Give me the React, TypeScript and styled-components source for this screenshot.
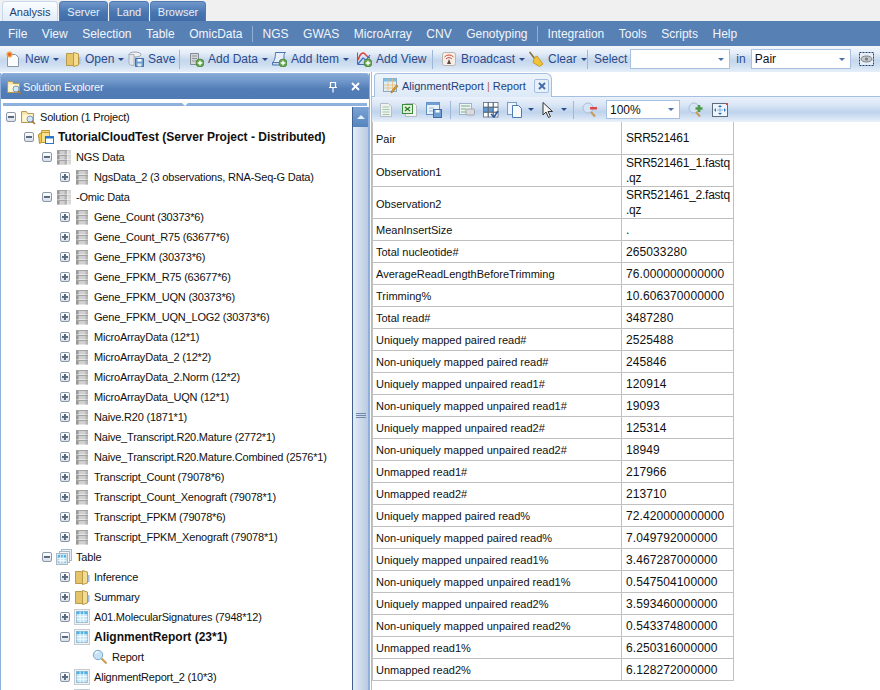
import React from 'react';
import styled, { createGlobalStyle } from 'styled-components';

const GlobalStyle = createGlobalStyle`
  html, body {
    margin: 0;
    padding: 0;
    background: #fff;
    font-family: 'Liberation Sans', Arial, sans-serif;
  }
`;

const Page = styled.div`
  width: 880px;
  height: 690px;
  overflow: hidden;
  display: flex;
  flex-direction: column;
  background: #fff;
`;

const TabStrip = styled.div`
  height: 21px;
  flex: none;
  display: flex;
  align-items: flex-end;
  gap: 1px;
  padding-left: 2px;
  background: #f0f0f0;
`;

const AppTab = styled.div<{ $active?: boolean; $w: number }>`
  box-sizing: border-box;
  width: ${(p) => p.$w}px;
  height: 20px;
  display: flex;
  align-items: center;
  justify-content: center;
  font-size: 11px;
  border: 1px solid ${(p) => (p.$active ? '#c6d8ee' : '#4f7ab2')};
  border-bottom: none;
  border-radius: 4px 4px 0 0;
  color: ${(p) => (p.$active ? '#1f3f70' : '#e8eff8')};
  background: ${(p) =>
    p.$active
      ? 'linear-gradient(#fbfdff, #e2ecf8)'
      : 'linear-gradient(#6f97cb, #4a76b0 55%, #3f6ba8)'};
`;

const MenuBar = styled.div`
  height: 25px;
  flex: none;
  display: flex;
  align-items: center;
  gap: 14.5px;
  padding-left: 8px;
  background: #5780b5;
  color: #f2f6fb;
  font-size: 12px;
`;

const MenuDivider = styled.div`
  width: 1px;
  height: 16px;
  margin: 0 -5px;
  background: #90afd4;
`;

const MainToolbar = styled.div`
  height: 26px;
  flex: none;
  display: flex;
  align-items: center;
  padding-left: 5px;
  color: #2b4a8b;
  font-size: 12px;
  background: linear-gradient(#f3f7fc, #e6eef8 25%, #c5d7ed 55%, #cfdff1 75%, #e6eff9);
`;

const ToolButton = styled.div<{ $w: number }>`
  width: ${(p) => p.$w}px;
  flex: none;
  display: flex;
  align-items: center;
  gap: 4px;
  white-space: nowrap;
`;

const Caret = styled.span`
  width: 0;
  height: 0;
  border-left: 3px solid transparent;
  border-right: 3px solid transparent;
  border-top: 3px solid #2b4a8b;
`;

const ToolDivider = styled.div<{ $mr: number }>`
  width: 1px;
  height: 19px;
  flex: none;
  margin-right: ${(p) => p.$mr}px;
  background: #9db7d8;
`;

const Combo = styled.div<{ $w: number; $h?: number }>`
  box-sizing: border-box;
  width: ${(p) => p.$w}px;
  height: ${(p) => p.$h || 20}px;
  flex: none;
  display: flex;
  align-items: center;
  justify-content: space-between;
  padding: 0 5px 0 3px;
  background: #fff;
  border: 1px solid #a9c1e0;
  color: #111;
  font-size: 12px;
`;

const ComboCaret = styled.span`
  width: 0;
  height: 0;
  border-left: 3px solid transparent;
  border-right: 3px solid transparent;
  border-top: 3px solid #4a70aa;
`;

const SelectLabel = styled.span<{ $ml: number; $mr: number }>`
  margin: 0 ${(p) => p.$mr}px 0 ${(p) => p.$ml}px;
`;

const EyeSlot = styled.div`
  margin-left: 8px;
`;

const Workspace = styled.div`
  flex: 1;
  min-height: 0;
  display: flex;
  background: #fff;
`;

const ExplorerPanel = styled.div`
  width: 370px;
  flex: none;
  display: flex;
  flex-direction: column;
  box-sizing: border-box;
  border-left: 1px solid #8fb0dc;
  border-right: 1px solid #8fb0dc;
  margin-top: 1px;
`;

const ExplorerHeader = styled.div`
  height: 26px;
  flex: none;
  display: flex;
  align-items: center;
  padding: 0 9px 0 5px;
  gap: 1px;
  box-sizing: border-box;
  border-top: 1px solid #8fb0dc;
  border-radius: 3px 3px 0 0;
  color: #f4f7fc;
  font-size: 11px;
  letter-spacing: -0.2px;
  background: linear-gradient(#86a9d5, #6e96c9 30%, #527db6 60%, #4f7ab4);
`;

const HeaderTitle = styled.span`
  flex: 1;
`;

const HeaderTools = styled.div`
  display: flex;
  align-items: center;
  gap: 13px;
`;

const SplitBand = styled.div`
  height: 3px;
  flex: none;
  margin: 4px 2px 0;
  display: flex;
  justify-content: center;
  background: #8db0dc;
`;

const SplitArrow = styled.span`
  width: 0;
  height: 0;
  border-left: 3px solid transparent;
  border-right: 3px solid transparent;
  border-top: 3px solid #fff;
`;

const ExplorerBody = styled.div`
  flex: 1;
  min-height: 0;
  display: flex;
  margin-top: 1px;
`;

const Tree = styled.div`
  flex: 1;
  min-width: 0;
  overflow: hidden;
  background: #fff;
`;

const TreeRow = styled.div<{ $level: number }>`
  height: 20px;
  flex: none;
  display: flex;
  align-items: center;
  gap: 4px;
  padding-left: ${(p) => 5 + p.$level * 18}px;
  color: #111;
  white-space: nowrap;
`;

const TreeLabel = styled.span<{ $bold?: boolean }>`
  font-weight: ${(p) => (p.$bold ? 700 : 400)};
  font-size: ${(p) => (p.$bold ? 12 : 11)}px;
  letter-spacing: ${(p) => (p.$bold ? 0 : -0.2)}px;
`;

const Expander = styled.span`
  box-sizing: border-box;
  width: 10px;
  height: 10px;
  flex: none;
  position: relative;
  border: 1px solid #8a97a8;
  border-radius: 2px;
  background: linear-gradient(#fff, #d9dfe8);
`;

const ExpanderBar = styled.span`
  position: absolute;
  left: 1px;
  top: 3px;
  width: 6px;
  height: 2px;
  background: #5b6b80;
`;

const ExpanderStem = styled.span`
  position: absolute;
  left: 3px;
  top: 1px;
  width: 2px;
  height: 6px;
  background: #5b6b80;
`;

const ExpanderGap = styled.span`
  width: 10px;
  flex: none;
`;

const Scrollbar = styled.div`
  width: 17px;
  flex: none;
  display: flex;
  flex-direction: column;
  box-sizing: border-box;
  border-left: 1px solid #3f608f;
  border-right: 1px solid #8fb0dc;
`;

const ScrollUp = styled.div`
  height: 20px;
  flex: none;
  display: flex;
  align-items: center;
  justify-content: center;
  background: linear-gradient(#7ba3d6, #5584be);
`;

const ScrollUpArrow = styled.span`
  width: 0;
  height: 0;
  border-left: 4px solid transparent;
  border-right: 4px solid transparent;
  border-bottom: 4px solid #e8f0fa;
`;

const ScrollThumb = styled.div`
  flex: 1;
  display: flex;
  flex-direction: column;
  align-items: center;
  justify-content: center;
  gap: 1px;
  padding-top: 14px;
  background: linear-gradient(90deg, #e6ecf5, #cfdbeb 50%, #b9cbe2);
`;

const GripLine = styled.span`
  width: 10px;
  height: 1px;
  background: #6f89ad;
`;

const ReportPanel = styled.div`
  flex: 1;
  min-width: 0;
  display: flex;
  flex-direction: column;
  margin-left: 1px;
  border-left: 1px solid #a5bfe2;
`;

const DocTabs = styled.div`
  height: 24px;
  flex: none;
  display: flex;
  align-items: flex-end;
  padding-left: 2px;
  border-bottom: 1px solid #a5bfe2;
`;

const DocTab = styled.div`
  box-sizing: border-box;
  width: 178px;
  height: 24px;
  margin-bottom: -1px;
  display: flex;
  align-items: center;
  gap: 3px;
  padding: 0 2px 0 8px;
  border: 1px solid #a5bfe2;
  border-bottom: none;
  border-radius: 4px 6px 0 0;
  font-size: 11px;
  color: #243f78;
  background: linear-gradient(#eef4fb, #dde9f8);
`;

const TabPipe = styled.span`
  color: #b5604e;
  margin: 0 3px;
`;

const TabTitle = styled.span`
  flex: 1;
  white-space: nowrap;
`;

const TabClose = styled.span`
  box-sizing: border-box;
  width: 15px;
  height: 14px;
  flex: none;
  display: flex;
  align-items: center;
  justify-content: center;
  border: 1px solid #a5bfe2;
  border-radius: 2px;
  background: #e8f0fa;
`;

const ReportToolbar = styled.div`
  height: 25px;
  flex: none;
  display: flex;
  align-items: center;
  gap: 8px;
  padding-left: 6px;
  background: linear-gradient(#eaf1fa, #dbe7f6 30%, #bfd3ec 60%, #d2e1f3 80%, #e9f1fa);
`;

const ReportDivider = styled.div`
  width: 1px;
  height: 18px;
  flex: none;
  background: #9db7d8;
`;

const CaretBox = styled.span`
  margin: 0 -2px 0 -3px;
  display: flex;
`;

const ReportScroll = styled.div`
  flex: 1;
  min-height: 0;
  overflow: hidden;
`;

const ReportTable = styled.table`
  border-collapse: collapse;
  table-layout: fixed;
  width: 362px;
  margin-top: -1px;
  font-size: 11px;
  color: #111;
`;

const ReportRow = styled.tr<{ $h: number }>`
  height: ${(p) => p.$h}px;
`;

const NameCell = styled.td<{ $tall: boolean }>`
  width: 249px;
  box-sizing: border-box;
  padding: ${(p) => (p.$tall ? 2 : 1)}px 3px 0;
  border: 1px solid #c0c0c0;
`;

const ValueCell = styled.td<{ $tall: boolean }>`
  box-sizing: border-box;
  padding: 1px 0 0 4px;
  border: 1px solid #c0c0c0;
  font-size: 12px;
  line-height: 15px;
  letter-spacing: ${(p) => (p.$tall ? -0.25 : 0.1)}px;
  white-space: pre-line;
`;

const Svg = ({ children, w = 16, h = 16 }: { children: React.ReactNode; w?: number; h?: number }) => (
  <svg width={w} height={h} viewBox={`0 0 ${w} ${h}`} style={{ flex: 'none', display: 'block' }}>
    {children}
  </svg>
);

const PlusBadge = () => (
  <>
    <circle cx="12" cy="12" r="4" fill="#6aa84f" stroke="#3f7d36" strokeWidth="0.7" />
    <path d="M12 9.7v4.6M9.7 12h4.6" stroke="#fff" strokeWidth="1.4" />
  </>
);

const PageIcon = () => (
  <Svg>
    <path d="M2.5 3.5h8l3 3v9h-11z" fill="#fbfcfe" stroke="#8a98ad" />
    <circle cx="4.5" cy="3.5" r="3" fill="#f2a23a" />
    <circle cx="4.5" cy="3.5" r="1.4" fill="#e8552c" />
  </Svg>
);

const FolderIcon = () => (
  <Svg>
    <path d="M1.5 2.5h6l1 1v11h-7z" fill="#e6c56a" stroke="#b89a4c" />
    <path d="M8.5 1.5l5 1.5v11l-5 1.5z" fill="#f5dc8e" stroke="#b89a4c" />
    <path d="M14 6h1.5v7H14z" fill="#9fc0e4" />
  </Svg>
);

const SaveIcon = () => (
  <Svg>
    <ellipse cx="7" cy="3.5" rx="6" ry="2.5" fill="#eef0f3" stroke="#9aa3ae" />
    <path d="M1 3.5v9c0 1.2 2.2 2 5 2V3.5z" fill="#e2e5ea" stroke="#a8b0ba" />
    <path d="M7.5 7.5h8v8h-8z" fill="#6f9ed2" stroke="#3d6ea8" />
    <path d="M9.5 8h4v2.5h-4z" fill="#fff" />
    <path d="M9.5 12.5h4v3h-4z" fill="#dfe7f0" />
  </Svg>
);

const AddDataIcon = () => (
  <Svg>
    <path d="M2.5 2.5h8v11h-8z" fill="#d4d7da" stroke="#858b92" />
    <path d="M4 5h5M4 7.5h5M4 10h5" stroke="#8d9399" />
    <PlusBadge />
  </Svg>
);

const AddItemIcon = () => (
  <Svg>
    <path d="M4.5 1.5h10c-1.5 1-1.5 2-1.5 3v7H1.5c1.5-1 3-4 3-10z" fill="#e6eef9" stroke="#4c74ad" />
    <path d="M1.5 11.5h10v2.5h-10z" fill="#cbdaf0" stroke="#4c74ad" />
    <PlusBadge />
  </Svg>
);

const AddViewIcon = () => (
  <Svg>
    <path d="M1.5 1.5v12h13" fill="none" stroke="#4b6fa8" />
    <path d="M2 9c2-7 5-8 7-6s3 4 5 4" fill="none" stroke="#d8433a" strokeWidth="1.4" />
    <path d="M2 13l5-6 3 2 4-5" fill="none" stroke="#3a6fc0" strokeWidth="1.2" />
    <PlusBadge />
  </Svg>
);

const BroadcastIcon = () => (
  <Svg>
    <rect x="1.5" y="1.5" width="13" height="13" rx="2" fill="#f6efe9" stroke="#b9b4ae" />
    <path d="M3.5 6a6 6 0 0 1 9 0M5 8a4 4 0 0 1 6 0" fill="none" stroke="#d0482f" />
    <path d="M8 8l-2 5h4z" fill="#5f4a3c" />
  </Svg>
);

const BroomIcon = () => (
  <Svg>
    <path d="M1.5 1l6 7.5" stroke="#8a6a35" strokeWidth="1.5" />
    <path d="M6.5 6.5l2.5-1.5 6 8-3.5 2.5-6.5-4z" fill="#efc23a" stroke="#c79a22" />
  </Svg>
);

const EyeIcon = () => (
  <Svg>
    <rect x="0.5" y="1.5" width="14" height="13" fill="#e6eef8" stroke="#23407c" strokeDasharray="2 1" />
    <ellipse cx="7.5" cy="8" rx="5.5" ry="3" fill="#c4c7cb" stroke="#7a7f86" />
    <circle cx="7.5" cy="8" r="1.6" fill="#777c83" />
  </Svg>
);

const SolutionIcon = () => (
  <Svg>
    <path d="M1.5 2.5h5l1 2h6v9h-12z" fill="#f6e3a6" stroke="#b59a55" />
    <path d="M2.5 5.5h10v7h-10z" fill="#fff6d8" />
    <circle cx="10" cy="10" r="3" fill="#d2e7f7" stroke="#7f9ab5" />
    <path d="M12 12l3 3" stroke="#a8783a" strokeWidth="1.5" />
  </Svg>
);

const ProjectIcon = () => (
  <Svg>
    <path d="M3.5 1.5h8v4h-8z" fill="#f5d978" stroke="#c09c36" />
    <path d="M0.5 5.5l3-2v10l-2 1z" fill="#f0c94f" stroke="#b58e2a" />
    <path d="M3.5 3.5h8v10h-8z" fill="#f7e08c" stroke="#c09c36" />
    <rect x="7.5" y="7.5" width="8" height="7" fill="#fff" stroke="#2c77c9" />
    <rect x="7.5" y="7.5" width="8" height="2" fill="#2c77c9" />
  </Svg>
);

const StackBars = ({ x, w = 12 }: { x: number; w?: number }) => (
  <>
    {[1, 6, 11].map((y) => (
      <g key={y}>
        <rect x={x} y={y} width={w} height="4.5" fill="#cfcfcf" />
        <rect x={x} y={y} width={w} height="1" fill="#a3a3a3" />
        <rect x={x} y={y + 1} width="2.5" height="3.5" fill="#989898" />
        <rect x={x + w - 2.5} y={y + 1} width="2.5" height="3.5" fill="#b5b5b5" />
      </g>
    ))}
  </>
);

const DataIcon = () => (
  <Svg>
    <StackBars x={2} />
  </Svg>
);

const DataGroupIcon = () => (
  <Svg>
    <g opacity="0.5">
      <StackBars x={5} w={10} />
    </g>
    <StackBars x={1} w={10} />
  </Svg>
);

const GridLines = ({ x, y, s }: { x: number; y: number; s: number }) => (
  <>
    <rect x={x} y={y} width={s} height={s} fill="#bfe4f7" stroke="#8db2c6" strokeWidth="0.8" />
    <rect x={x} y={y} width={s} height="2.5" fill="#4eb3e8" />
    <path
      d={`M${x} ${y + s * 0.45}h${s}M${x} ${y + s * 0.7}h${s}M${x + s * 0.33} ${y}v${s}M${x + s * 0.66} ${y}v${s}`}
      stroke="#fff"
      strokeWidth="0.8"
    />
  </>
);

const TableIcon = () => (
  <Svg>
    <rect x="0.5" y="0.5" width="15" height="15" fill="#f3f3f3" stroke="#c5cbd2" />
    <GridLines x={2.5} y={2.5} s={11} />
  </Svg>
);

const TableGroupIcon = () => (
  <Svg>
    <rect x="5.5" y="0.5" width="10" height="11" fill="#eaf0f6" stroke="#a9b8c7" />
    <rect x="3.5" y="2.5" width="10" height="11" fill="#f2f6fa" stroke="#a9b8c7" />
    <rect x="0.5" y="4.5" width="11" height="11" fill="#fff" stroke="#a9b8c7" />
    <GridLines x={2} y={6} s={8} />
  </Svg>
);

const MagnifierIcon = () => (
  <Svg>
    <circle cx="6" cy="6" r="4.7" fill="#c5e3f7" stroke="#7ca7c8" />
    <path d="M3.5 4.5a3 3 0 0 1 3-1.5" fill="none" stroke="#fff" strokeWidth="1.2" />
    <path d="M9.5 9.5l5 5" stroke="#c99a55" strokeWidth="2" />
  </Svg>
);

const ReportDocIcon = () => (
  <Svg>
    <path d="M2.5 1.5h8l3 3v10h-11z" fill="#f1f3f1" stroke="#b4bcc4" />
    <path d="M4.5 5h7M4.5 7.5h7M4.5 10h7M4.5 12.5h7" stroke="#9fc5a8" />
  </Svg>
);

const ExcelDocIcon = () => (
  <Svg>
    <path d="M3.5 1.5h9l2 2v11h-11z" fill="#f3f4f2" stroke="#b4bcc4" />
    <rect x="0.5" y="2.5" width="10" height="9" fill="#dff0d4" stroke="#3c8b3c" />
    <path d="M3 5l5 4M8 5l-5 4" stroke="#2c7a2c" strokeWidth="1.3" />
  </Svg>
);

const SaveTableIcon = () => (
  <Svg>
    <rect x="0.5" y="0.5" width="13" height="12" fill="#e9f2fb" stroke="#5f8fc6" />
    <rect x="0.5" y="0.5" width="13" height="2.5" fill="#6f9fd6" />
    <path d="M3 6h5M3 9h5" stroke="#9ab8d8" />
    <rect x="7.5" y="7.5" width="8" height="8" fill="#6f9ed2" stroke="#3d6ea8" />
    <rect x="9.5" y="8" width="4" height="2.5" fill="#fff" />
  </Svg>
);

const ViewTableIcon = () => (
  <Svg>
    <rect x="0.5" y="1.5" width="12" height="11" fill="#eef3f9" stroke="#9cb2cb" />
    <path d="M2 4h9M2 7h5M2 10h5" stroke="#70b070" />
    <rect x="7" y="7" width="8.5" height="6" rx="1" fill="#d8dade" stroke="#a5a8ad" />
    <path d="M10 13l1 2.5 1-2.5z" fill="#c0c2c6" />
  </Svg>
);

const GridCheckIcon = () => (
  <Svg>
    {[0, 5, 10].map((y) =>
      [0, 5, 10].map((x) => (
        <rect key={`${x}-${y}`} x={x + 0.5} y={y + 0.5} width="4.5" height="4.5" fill={y === 5 && x < 10 ? '#5f9ad6' : '#fff'} stroke="#5d6a7a" strokeWidth="0.8" />
      )),
    )}
    <path d="M8 12l3 3 4-6" fill="none" stroke="#2c5aa0" strokeWidth="1.6" />
  </Svg>
);

const PagesIcon = () => (
  <Svg>
    <rect x="0.5" y="0.5" width="9" height="12" fill="#eef4fb" stroke="#7d9cc4" />
    <path d="M5.5 3.5h6l3 3v9h-9z" fill="#f8fbfe" stroke="#4f7bb5" />
  </Svg>
);

const CursorIcon = () => (
  <Svg>
    <path d="M3 0.5v12.5l3-3 2.5 5.5 2-1-2.5-5h4.5z" fill="#f4f4f4" stroke="#333" />
  </Svg>
);

const ZoomOutIcon = () => (
  <Svg>
    <circle cx="6" cy="6" r="5" fill="#d5e4f4" stroke="#a9bfd8" />
    <path d="M9 10l4 4.5" stroke="#c99a55" strokeWidth="2" />
    <rect x="8" y="5" width="7" height="2.5" fill="#d84a4a" />
  </Svg>
);

const ZoomInIcon = () => (
  <Svg>
    <circle cx="6" cy="6" r="5" fill="#d5e4f4" stroke="#a9bfd8" />
    <path d="M8 10l4 4.5" stroke="#c99a55" strokeWidth="2" />
    <path d="M11 3v7M7.5 6.5h7" stroke="#4f9a45" strokeWidth="2.6" />
  </Svg>
);

const FitIcon = () => (
  <Svg>
    <rect x="0.5" y="1.5" width="15" height="13" fill="#eef4fb" stroke="#5d6b7a" />
    <path d="M8 3l-2 2h4zM8 13l-2-2h4zM2 8l2-2v4zM14 8l-2-2v4z" fill="#2f78c4" />
    <path d="M5 8h6M8 5v6" stroke="#8fb6dc" />
    <path d="M14 1h2v2h-2z" fill="#d84a4a" />
  </Svg>
);

const TabTableIcon = () => (
  <Svg>
    <rect x="0.5" y="0.5" width="13" height="13" fill="#dceffa" stroke="#8fa7bf" />
    <rect x="0.5" y="0.5" width="13" height="3" fill="#79bde8" />
    <path d="M0.5 7h13M0.5 10h13M5 0.5v13M9.5 0.5v13" stroke="#f3b65e" strokeWidth="0.7" />
    <path d="M8 15l2-1 5-6-1.5-1-5 6z" fill="#e0a030" stroke="#8a6a20" strokeWidth="0.6" />
  </Svg>
);

const PinIcon = () => (
  <Svg w={10} h={12}>
    <path d="M2.5 1.5h5v5h-5zM1 6.5h8M5 6.5v5" fill="none" stroke="#fff" strokeWidth="1.2" />
  </Svg>
);

const CloseIcon = ({ color = '#fff', s = 9 }: { color?: string; s?: number }) => (
  <Svg w={s} h={s}>
    <path d={`M1 1L${s - 1} ${s - 1}M${s - 1} 1L1 ${s - 1}`} stroke={color} strokeWidth="1.8" />
  </Svg>
);

type IconKind = 'solution' | 'project' | 'dataGroup' | 'data' | 'tableGroup' | 'folder' | 'table' | 'search';

const treeIcons: Record<IconKind, React.ReactNode> = {
  solution: <SolutionIcon />,
  project: <ProjectIcon />,
  dataGroup: <DataGroupIcon />,
  data: <DataIcon />,
  tableGroup: <TableGroupIcon />,
  folder: <FolderIcon />,
  table: <TableIcon />,
  search: <MagnifierIcon />,
};

type Node = {
  level: number;
  state?: 'open' | 'closed';
  icon: IconKind;
  label: string;
  bold?: boolean;
};

const omicRows = [
  'Gene_Count (30373*6)',
  'Gene_Count_R75 (63677*6)',
  'Gene_FPKM (30373*6)',
  'Gene_FPKM_R75 (63677*6)',
  'Gene_FPKM_UQN (30373*6)',
  'Gene_FPKM_UQN_LOG2 (30373*6)',
  'MicroArrayData (12*1)',
  'MicroArrayData_2 (12*2)',
  'MicroArrayData_2.Norm (12*2)',
  'MicroArrayData_UQN (12*1)',
  'Naive.R20 (1871*1)',
  'Naive_Transcript.R20.Mature (2772*1)',
  'Naive_Transcript.R20.Mature.Combined (2576*1)',
  'Transcript_Count (79078*6)',
  'Transcript_Count_Xenograft (79078*1)',
  'Transcript_FPKM (79078*6)',
  'Transcript_FPKM_Xenograft (79078*1)',
];

const nodes: Node[] = [
  { level: 0, state: 'open', icon: 'solution', label: 'Solution (1 Project)' },
  { level: 1, state: 'open', icon: 'project', label: 'TutorialCloudTest (Server Project - Distributed)', bold: true },
  { level: 2, state: 'open', icon: 'dataGroup', label: 'NGS Data' },
  { level: 3, state: 'closed', icon: 'data', label: 'NgsData_2 (3 observations, RNA-Seq-G Data)' },
  { level: 2, state: 'open', icon: 'dataGroup', label: '-Omic Data' },
  ...omicRows.map((label): Node => ({ level: 3, state: 'closed', icon: 'data', label })),
  { level: 2, state: 'open', icon: 'tableGroup', label: 'Table' },
  { level: 3, state: 'closed', icon: 'folder', label: 'Inference' },
  { level: 3, state: 'closed', icon: 'folder', label: 'Summary' },
  { level: 3, state: 'closed', icon: 'table', label: 'A01.MolecularSignatures (7948*12)' },
  { level: 3, state: 'open', icon: 'table', label: 'AlignmentReport (23*1)', bold: true },
  { level: 4, icon: 'search', label: 'Report' },
  { level: 3, state: 'closed', icon: 'table', label: 'AlignmentReport_2 (10*3)' },
  { level: 3, state: 'closed', icon: 'table', label: '' },
];

const reportRows: [string, string, number][] = [
  ['Pair', 'SRR521461', 33],
  ['Observation1', 'SRR521461_1.fastq\n.qz', 32],
  ['Observation2', 'SRR521461_2.fastq\n.qz', 32],
  ['MeanInsertSize', '.', 22],
  ['Total nucleotide#', '265033280', 22],
  ['AverageReadLengthBeforeTrimming', '76.000000000000', 22],
  ['Trimming%', '10.606370000000', 22],
  ['Total read#', '3487280', 22],
  ['Uniquely mapped paired read#', '2525488', 22],
  ['Non-uniquely mapped paired read#', '245846', 22],
  ['Uniquely mapped unpaired read1#', '120914', 22],
  ['Non-uniquely mapped unpaired read1#', '19093', 22],
  ['Uniquely mapped unpaired read2#', '125314', 22],
  ['Non-uniquely mapped unpaired read2#', '18949', 22],
  ['Unmapped read1#', '217966', 22],
  ['Unmapped read2#', '213710', 22],
  ['Uniquely mapped paired read%', '72.420000000000', 22],
  ['Non-uniquely mapped paired read%', '7.049792000000', 22],
  ['Uniquely mapped unpaired read1%', '3.467287000000', 22],
  ['Non-uniquely mapped unpaired read1%', '0.547504100000', 22],
  ['Uniquely mapped unpaired read2%', '3.593460000000', 22],
  ['Non-uniquely mapped unpaired read2%', '0.543374800000', 22],
  ['Unmapped read1%', '6.250316000000', 22],
  ['Unmapped read2%', '6.128272000000', 22],
];

const menuLeft = ['File', 'View', 'Selection', 'Table', 'OmicData'];
const menuMiddle = ['NGS', 'GWAS', 'MicroArray', 'CNV', 'Genotyping'];
const menuRight = ['Integration', 'Tools', 'Scripts', 'Help'];

const App = () => (
  <Page>
    <GlobalStyle />
    <TabStrip>
      <AppTab $active $w={56}>Analysis</AppTab>
      <AppTab $w={49}>Server</AppTab>
      <AppTab $w={40}>Land</AppTab>
      <AppTab $w={56}>Browser</AppTab>
    </TabStrip>
    <MenuBar>
      {menuLeft.map((m) => <span key={m}>{m}</span>)}
      <MenuDivider />
      {menuMiddle.map((m) => <span key={m}>{m}</span>)}
      <MenuDivider />
      {menuRight.map((m) => <span key={m}>{m}</span>)}
    </MenuBar>
    <MainToolbar>
      <ToolButton $w={60}><PageIcon />New<Caret /></ToolButton>
      <ToolButton $w={63}><FolderIcon />Open<Caret /></ToolButton>
      <ToolButton $w={51}><SaveIcon />Save</ToolButton>
      <ToolDivider $mr={8} />
      <ToolButton $w={83}><AddDataIcon />Add Data<Caret /></ToolButton>
      <ToolButton $w={85}><AddItemIcon />Add Item<Caret /></ToolButton>
      <ToolButton $w={76}><AddViewIcon />Add View</ToolButton>
      <ToolDivider $mr={8} />
      <ToolButton $w={87}><BroadcastIcon />Broadcast<Caret /></ToolButton>
      <ToolButton $w={59}><BroomIcon />Clear<Caret /></ToolButton>
      <ToolDivider $mr={6} />
      <SelectLabel $ml={0} $mr={3}>Select</SelectLabel>
      <Combo $w={100}><span /><ComboCaret /></Combo>
      <SelectLabel $ml={6} $mr={5}>in</SelectLabel>
      <Combo $w={100}>Pair<ComboCaret /></Combo>
      <EyeSlot><EyeIcon /></EyeSlot>
    </MainToolbar>
    <Workspace>
      <ExplorerPanel>
        <ExplorerHeader>
          <SolutionIcon />
          <HeaderTitle>Solution Explorer</HeaderTitle>
          <HeaderTools>
            <PinIcon />
            <CloseIcon />
          </HeaderTools>
        </ExplorerHeader>
        <SplitBand><SplitArrow /></SplitBand>
        <ExplorerBody>
          <Tree>
            {nodes.map((n, i) => (
              <TreeRow key={i} $level={n.level}>
                {n.state ? (
                  <Expander>
                    <ExpanderBar />
                    {n.state === 'closed' && <ExpanderStem />}
                  </Expander>
                ) : (
                  <ExpanderGap />
                )}
                {treeIcons[n.icon]}
                <TreeLabel $bold={n.bold}>{n.label}</TreeLabel>
              </TreeRow>
            ))}
          </Tree>
          <Scrollbar>
            <ScrollUp><ScrollUpArrow /></ScrollUp>
            <ScrollThumb>
              <GripLine />
              <GripLine />
              <GripLine />
            </ScrollThumb>
          </Scrollbar>
        </ExplorerBody>
      </ExplorerPanel>
      <ReportPanel>
        <DocTabs>
          <DocTab>
            <TabTableIcon />
            <TabTitle>AlignmentReport<TabPipe>|</TabPipe>Report</TabTitle>
            <TabClose><CloseIcon color="#3f6aa5" s={8} /></TabClose>
          </DocTab>
        </DocTabs>
        <ReportToolbar>
          <ReportDocIcon />
          <ExcelDocIcon />
          <SaveTableIcon />
          <ReportDivider />
          <ViewTableIcon />
          <GridCheckIcon />
          <PagesIcon />
          <CaretBox><Caret /></CaretBox>
          <CursorIcon />
          <CaretBox><Caret /></CaretBox>
          <ReportDivider />
          <ZoomOutIcon />
          <Combo $w={74} $h={19}>100%<ComboCaret /></Combo>
          <ZoomInIcon />
          <FitIcon />
        </ReportToolbar>
        <ReportScroll>
          <ReportTable>
            <tbody>
              {reportRows.map(([name, value, h]) => (
                <ReportRow key={name} $h={h}>
                  <NameCell $tall={h > 22}>{name}</NameCell>
                  <ValueCell $tall={h > 22}>{value}</ValueCell>
                </ReportRow>
              ))}
            </tbody>
          </ReportTable>
        </ReportScroll>
      </ReportPanel>
    </Workspace>
  </Page>
);

export default App;
